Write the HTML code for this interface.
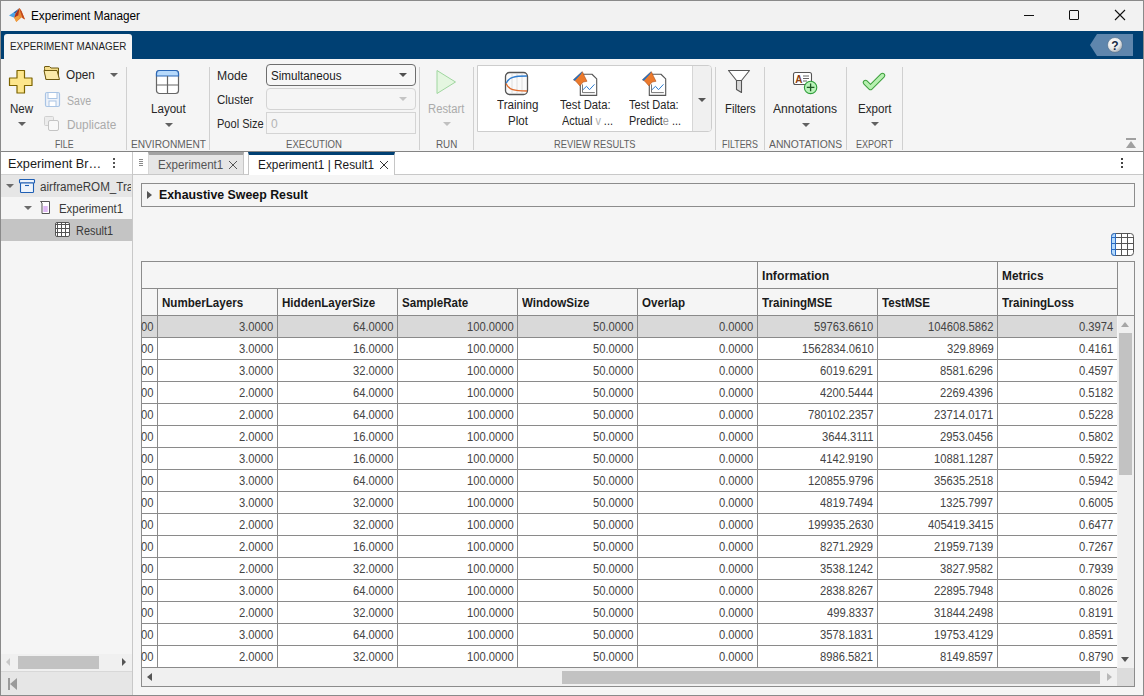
<!DOCTYPE html>
<html><head><meta charset="utf-8">
<style>
*{box-sizing:border-box;margin:0;padding:0}
html,body{width:1144px;height:696px;overflow:hidden;background:#f5f5f5;font-family:"Liberation Sans",sans-serif;color:#212121;position:relative}
.a{position:absolute}
.t{position:absolute;white-space:nowrap}
</style></head><body>
<div class="a" style="left:0px;top:0px;width:1144px;height:31px;background:#f2f2f2"></div>
<svg class="a" style="left:8px;top:7px;" width="18" height="16" viewBox="0 0 18 16">
<path d="M1 8.4 L5.5 5.6 L7.6 6.8 L6.2 10.8 Z" fill="#4aa3e6"/>
<path d="M5.5 5.6 L9.6 2.6 L11.5 1 L7.6 6.8 Z" fill="#2a64ad"/>
<path d="M11.5 1 L13.6 4.2 L17 12.4 L13.5 10.4 L8.3 15 L6.2 10.8 L7.6 6.8 Z" fill="#e98a35"/>
<path d="M11.5 1 L13.6 4.2 L17 12.4 L14.5 10.9 L12.4 5 Z" fill="#c0461e"/>
<path d="M7.6 6.8 L11.5 1 L10.2 8.6 L6.2 10.8 Z" fill="#a83220"/>
<path d="M6.2 10.8 L10.2 8.6 L12 10.5 L8.3 15 Z" fill="#f0a040"/>
</svg>
<div class="t " style="left:31.00px;top:9.03px;font-size:12px;line-height:14px;color:#000;transform:scaleX(0.9785);transform-origin:0 0;">Experiment Manager</div>
<div class="a" style="left:1024px;top:15px;width:10px;height:1px;background:#111"></div>
<div class="a" style="left:1069px;top:10px;width:10px;height:10px;border:1px solid #111;border-radius:1px"></div>
<svg class="a" style="left:1114px;top:9px;" width="12" height="12" viewBox="0 0 12 12"><path d="M1 1 L11 11 M11 1 L1 11" stroke="#111" stroke-width="1.1"/></svg>
<div class="a" style="left:0px;top:31px;width:1144px;height:28px;background:#004073"></div>
<div class="a" style="left:4px;top:34px;width:128px;height:25px;background:#f5f5f5;border-radius:3px 3px 0 0"></div>
<div class="t " style="left:9.50px;top:39.80px;font-size:11.2px;line-height:13px;color:#1e1e1e;transform:scaleX(0.8802);transform-origin:0 0;">EXPERIMENT MANAGER</div>
<svg class="a" style="left:1089px;top:34px;" width="45" height="22" viewBox="0 0 45 22"><path d="M1 11 L8 0 L44 0 L44 22 L8 22 Z" fill="#5f86ad"/><defs><radialGradient id="hg" cx="0.4" cy="0.35" r="0.7"><stop offset="0" stop-color="#ffffff"/><stop offset="0.6" stop-color="#e8e8e8"/><stop offset="1" stop-color="#9aa4ae"/></radialGradient></defs><circle cx="26" cy="11" r="7.5" fill="url(#hg)" stroke="#4a6a8a" stroke-width="0.6"/><text x="26" y="15.5" text-anchor="middle" font-family="Liberation Sans" font-weight="bold" font-size="12" fill="#1a2a44">?</text></svg>
<div class="a" style="left:0px;top:59px;width:1144px;height:93px;background:#f5f5f5;border-bottom:1px solid #848484"></div>
<div class="a" style="left:126px;top:67px;width:1px;height:83px;background:#d0d0d0"></div>
<div class="a" style="left:209px;top:67px;width:1px;height:83px;background:#d0d0d0"></div>
<div class="a" style="left:419px;top:67px;width:1px;height:83px;background:#d0d0d0"></div>
<div class="a" style="left:473px;top:67px;width:1px;height:83px;background:#d0d0d0"></div>
<div class="a" style="left:715px;top:67px;width:1px;height:83px;background:#d0d0d0"></div>
<div class="a" style="left:764px;top:67px;width:1px;height:83px;background:#d0d0d0"></div>
<div class="a" style="left:846px;top:67px;width:1px;height:83px;background:#d0d0d0"></div>
<div class="a" style="left:902px;top:67px;width:1px;height:83px;background:#d0d0d0"></div>
<div class="t " style="left:54.50px;top:137.86px;font-size:11px;line-height:13px;color:#5f5f5f;transform:scaleX(0.7957);transform-origin:0 0;">FILE</div>
<div class="t " style="left:130.50px;top:137.86px;font-size:11px;line-height:13px;color:#5f5f5f;transform:scaleX(0.9225);transform-origin:0 0;">ENVIRONMENT</div>
<div class="t " style="left:286.00px;top:137.86px;font-size:11px;line-height:13px;color:#5f5f5f;transform:scaleX(0.8730);transform-origin:0 0;">EXECUTION</div>
<div class="t " style="left:435.70px;top:137.86px;font-size:11px;line-height:13px;color:#5f5f5f;transform:scaleX(0.8931);transform-origin:0 0;">RUN</div>
<div class="t " style="left:554.20px;top:137.86px;font-size:11px;line-height:13px;color:#5f5f5f;transform:scaleX(0.8459);transform-origin:0 0;">REVIEW RESULTS</div>
<div class="t " style="left:722.00px;top:137.86px;font-size:11px;line-height:13px;color:#5f5f5f;transform:scaleX(0.8108);transform-origin:0 0;">FILTERS</div>
<div class="t " style="left:768.70px;top:137.86px;font-size:11px;line-height:13px;color:#5f5f5f;transform:scaleX(0.9396);transform-origin:0 0;">ANNOTATIONS</div>
<div class="t " style="left:856.00px;top:137.86px;font-size:11px;line-height:13px;color:#5f5f5f;transform:scaleX(0.8213);transform-origin:0 0;">EXPORT</div>
<svg class="a" style="left:8px;top:69px;" width="26" height="26" viewBox="0 0 26 26"><path d="M9 1.5 H16.5 V9 H24 V16.5 H16.5 V24 H9 V16.5 H1.5 V9 H9 Z" fill="#fde68c" stroke="#7d6400" stroke-width="1.2" stroke-linejoin="round"/></svg>
<div class="t " style="left:9.80px;top:102.03px;font-size:12px;line-height:14px;color:#262626;transform:scaleX(0.9605);transform-origin:0 0;">New</div>
<div class="a" style="left:18.0px;top:122px;width:0;height:0;border-left:4.0px solid transparent;border-right:4.0px solid transparent;border-top:4px solid #616161"></div>
<svg class="a" style="left:43px;top:65px;" width="19" height="16" viewBox="0 0 19 16"><path d="M1.5 3.5 L1.5 2 Q1.5 1.5 2 1.5 L6.5 1.5 L8 3 L15.5 3 L15.5 14.5 L3 14.5 Z" fill="#f3dc8a" stroke="#6e5a10" stroke-width="1"/><path d="M3 14.5 L1 5.5 L14 5.5 L16.5 14.5 Z" fill="#fbeaa8" stroke="#6e5a10" stroke-width="1" stroke-linejoin="round"/></svg>
<div class="t " style="left:66.20px;top:68.03px;font-size:12px;line-height:14px;color:#262626;transform:scaleX(0.9813);transform-origin:0 0;">Open</div>
<div class="a" style="left:110.0px;top:73px;width:0;height:0;border-left:4.0px solid transparent;border-right:4.0px solid transparent;border-top:4px solid #616161"></div>
<svg class="a" style="left:44px;top:91px;" width="17" height="17" viewBox="0 0 17 17"><rect x="1.5" y="1.5" width="14" height="14" rx="1.5" fill="#eef3fa" stroke="#a9c4e4" stroke-width="1.2"/><rect x="4" y="1.5" width="9" height="6" fill="#ffffff" stroke="#a9c4e4" stroke-width="1"/><rect x="5" y="10" width="7" height="5.5" fill="#ffffff" stroke="#a9c4e4" stroke-width="1"/></svg>
<div class="t " style="left:67.30px;top:94.03px;font-size:12px;line-height:14px;color:#ababab;transform:scaleX(0.8812);transform-origin:0 0;">Save</div>
<svg class="a" style="left:43px;top:115px;" width="17" height="17" viewBox="0 0 17 17"><rect x="1.5" y="1.5" width="9" height="9" rx="1" fill="#ececec" stroke="#d0d0d0" stroke-width="1"/><rect x="5.5" y="5.5" width="10" height="10" rx="1.5" fill="#f8f8f8" stroke="#c4c4c4" stroke-width="1"/></svg>
<div class="t " style="left:66.70px;top:117.63px;font-size:12px;line-height:14px;color:#ababab;transform:scaleX(0.9850);transform-origin:0 0;">Duplicate</div>
<svg class="a" style="left:155px;top:69px;" width="25" height="26" viewBox="0 0 25 26"><rect x="1.5" y="1.5" width="22" height="23" rx="3" fill="#fff" stroke="#666" stroke-width="1.2"/><path d="M1.5 7 V4.5 Q1.5 1.5 4.5 1.5 H20.5 Q23.5 1.5 23.5 4.5 V7 Z" fill="#b6d9fb" stroke="#2b68b8" stroke-width="1.2"/><path d="M12.5 7 V24.5 M1.5 16 H23.5" stroke="#666" stroke-width="1.2"/></svg>
<div class="t " style="left:150.50px;top:102.03px;font-size:12px;line-height:14px;color:#262626;transform:scaleX(0.9653);transform-origin:0 0;">Layout</div>
<div class="a" style="left:165.0px;top:123px;width:0;height:0;border-left:4.0px solid transparent;border-right:4.0px solid transparent;border-top:4px solid #616161"></div>
<div class="t " style="left:216.50px;top:69.03px;font-size:12px;line-height:14px;color:#262626;transform:scaleX(1.0167);transform-origin:0 0;">Mode</div>
<div class="t " style="left:216.50px;top:92.73px;font-size:12px;line-height:14px;color:#262626;transform:scaleX(0.9579);transform-origin:0 0;">Cluster</div>
<div class="t " style="left:216.50px;top:116.53px;font-size:12px;line-height:14px;color:#262626;transform:scaleX(0.9211);transform-origin:0 0;">Pool Size</div>
<div class="a" style="left:266px;top:64px;width:150px;height:22px;border:1px solid #6e6e6e;border-radius:4px;background:#f7f7f7"></div>
<div class="t " style="left:271.00px;top:69.03px;font-size:12px;line-height:14px;color:#1a1a1a;transform:scaleX(0.9697);transform-origin:0 0;">Simultaneous</div>
<div class="a" style="left:399.0px;top:73px;width:0;height:0;border-left:4.0px solid transparent;border-right:4.0px solid transparent;border-top:4px solid #505050"></div>
<div class="a" style="left:266px;top:88px;width:150px;height:22px;border:1px solid #d4d4d4;border-radius:4px;background:#f5f5f5"></div>
<div class="a" style="left:399.0px;top:97px;width:0;height:0;border-left:4.0px solid transparent;border-right:4.0px solid transparent;border-top:4px solid #c4c4c4"></div>
<div class="a" style="left:266px;top:112px;width:150px;height:22px;border:1px solid #d4d4d4;background:#f5f5f5"></div>
<div class="t " style="left:271.00px;top:116.53px;font-size:12px;line-height:14px;color:#b4b4b4;">0</div>
<svg class="a" style="left:433px;top:69px;" width="25" height="26" viewBox="0 0 25 26"><path d="M4 1.5 L22.5 13 L4 24.5 Z" fill="#e4f6e0" stroke="#9fd69f" stroke-width="1" stroke-linejoin="round"/></svg>
<div class="t " style="left:428.00px;top:102.03px;font-size:12px;line-height:14px;color:#ababab;transform:scaleX(0.9380);transform-origin:0 0;">Restart</div>
<div class="a" style="left:442.5px;top:122px;width:0;height:0;border-left:4.0px solid transparent;border-right:4.0px solid transparent;border-top:4px solid #c0c0c0"></div>
<div class="a" style="left:477px;top:65px;width:235px;height:67px;background:#fff;border:1px solid #cdcdcd;border-radius:0 4px 4px 0"></div>
<div class="a" style="left:692px;top:66px;width:19px;height:65px;background:#f0f0f0;border-left:1px solid #d6d6d6;border-radius:0 3px 3px 0"></div>
<div class="a" style="left:698.0px;top:98px;width:0;height:0;border-left:4.0px solid transparent;border-right:4.0px solid transparent;border-top:4px solid #555"></div>
<svg class="a" style="left:504px;top:71px;" width="25" height="25" viewBox="0 0 25 25"><rect x="1.5" y="1.5" width="22" height="22" rx="4" fill="#fafafa" stroke="#555" stroke-width="1.3"/><path d="M8 3 V22 M13 3 V22 M18 3 V22" stroke="#ececec" stroke-width="2"/><path d="M2 12.5 C5 6 10 5 23 5" fill="none" stroke="#2f7dd0" stroke-width="1.3"/><path d="M2 12.5 C5 19 10 20 23 20" fill="none" stroke="#e06a2a" stroke-width="1.3"/></svg>
<div class="t " style="left:496.60px;top:98.03px;font-size:12px;line-height:14px;color:#262626;transform:scaleX(0.9650);transform-origin:0 0;">Training</div>
<div class="t " style="left:507.60px;top:113.73px;font-size:12px;line-height:14px;color:#262626;transform:scaleX(0.9614);transform-origin:0 0;">Plot</div>
<svg class="a" style="left:572px;top:71px;" width="26" height="26" viewBox="0 0 26 26"><path d="M8.3 3.25 H20 L24.7 7.8 V24.4 H8.3 Z" fill="#fff" stroke="#555" stroke-width="1.1" stroke-linejoin="round"/><path d="M10.5 13.4 V21.6 H22.8" fill="none" stroke="#777" stroke-width="1"/><path d="M11 18.7 L14.5 15.3 L17.5 18.7 L22.5 13.3" fill="none" stroke="#2f7dd0" stroke-width="1"/><path d="M10.4 0.8 L12.6 5.5 L15 10.3 L11.2 11 L7.8 14.8 L3.6 10 L1.5 8.8 L9.6 1.2 Z" fill="#ec7a2c" stroke="#b0501a" stroke-width="0.6"/><path d="M1.2 8.8 L9.6 1.0 L10.4 0.8 L8.6 3.6 L2.9 9.7 Z" fill="#1f6fc2"/></svg>
<div class="t " style="left:560.40px;top:97.83px;font-size:12px;line-height:14px;color:#262626;transform:scaleX(0.9362);transform-origin:0 0;">Test Data:</div>
<div class="t " style="left:562.00px;top:113.53px;font-size:12px;line-height:14px;color:#262626;transform:scaleX(0.9099);transform-origin:0 0;">Actual <span style="color:#b0b0b0">v</span> ...</div>
<svg class="a" style="left:641px;top:71px;" width="26" height="26" viewBox="0 0 26 26"><path d="M8.3 3.25 H20 L24.7 7.8 V24.4 H8.3 Z" fill="#fff" stroke="#555" stroke-width="1.1" stroke-linejoin="round"/><path d="M10.5 13.4 V21.6 H22.8" fill="none" stroke="#777" stroke-width="1"/><path d="M11 18.7 L14.5 15.3 L17.5 18.7 L22.5 13.3" fill="none" stroke="#2f7dd0" stroke-width="1"/><path d="M10.4 0.8 L12.6 5.5 L15 10.3 L11.2 11 L7.8 14.8 L3.6 10 L1.5 8.8 L9.6 1.2 Z" fill="#ec7a2c" stroke="#b0501a" stroke-width="0.6"/><path d="M1.2 8.8 L9.6 1.0 L10.4 0.8 L8.6 3.6 L2.9 9.7 Z" fill="#1f6fc2"/></svg>
<div class="t " style="left:628.80px;top:97.83px;font-size:12px;line-height:14px;color:#262626;transform:scaleX(0.9195);transform-origin:0 0;">Test Data:</div>
<div class="t " style="left:628.80px;top:113.53px;font-size:12px;line-height:14px;color:#262626;transform:scaleX(0.9067);transform-origin:0 0;">Predict<span style="color:#9a9a9a">e</span> ...</div>
<svg class="a" style="left:727px;top:69px;" width="25" height="26" viewBox="0 0 25 26"><path d="M1.5 1.5 H22.5 L14.5 11.5 H9.5 Z" fill="#fff" stroke="#555" stroke-width="1.1" stroke-linejoin="round"/><path d="M9.5 11.5 H14.5 V23.5 L9.5 20.5 Z" fill="#d8d8d8" stroke="#555" stroke-width="1.1" stroke-linejoin="round"/></svg>
<div class="t " style="left:724.90px;top:102.03px;font-size:12px;line-height:14px;color:#262626;transform:scaleX(0.9403);transform-origin:0 0;">Filters</div>
<svg class="a" style="left:791px;top:70px;" width="28" height="26" viewBox="0 0 28 26"><rect x="2.5" y="2.5" width="18" height="12" rx="2" fill="#fff" stroke="#555" stroke-width="1.1"/><text x="4.2" y="12.6" font-family="Liberation Sans" font-weight="bold" font-size="10" fill="#8a4010">A</text><path d="M12 6 H18 M12 8.5 H18 M12 11 H16" stroke="#666" stroke-width="1"/><circle cx="19.6" cy="17.4" r="6.2" fill="#b9f2b9" stroke="#2e9e3a" stroke-width="1.1"/><path d="M19.6 13.6 V21.2 M15.8 17.4 H23.4" stroke="#1d5a24" stroke-width="1.3"/></svg>
<div class="t " style="left:772.80px;top:102.03px;font-size:12px;line-height:14px;color:#262626;transform:scaleX(1.0095);transform-origin:0 0;">Annotations</div>
<div class="a" style="left:802.0px;top:123px;width:0;height:0;border-left:4.0px solid transparent;border-right:4.0px solid transparent;border-top:4px solid #616161"></div>
<svg class="a" style="left:860px;top:71px;" width="28" height="22" viewBox="0 0 28 22"><path d="M5.5 11.5 L10.5 16.5 L22.5 4.5" fill="none" stroke="#3ea03e" stroke-width="5.4" stroke-linecap="round" stroke-linejoin="round"/><path d="M5.5 11.5 L10.5 16.5 L22.5 4.5" fill="none" stroke="#b7f0b0" stroke-width="3.4" stroke-linecap="round" stroke-linejoin="round"/></svg>
<div class="t " style="left:857.50px;top:102.03px;font-size:12px;line-height:14px;color:#262626;transform:scaleX(0.9654);transform-origin:0 0;">Export</div>
<div class="a" style="left:871.0px;top:122px;width:0;height:0;border-left:4.0px solid transparent;border-right:4.0px solid transparent;border-top:4px solid #616161"></div>
<div class="a" style="left:1126px;top:138px;width:10px;height:2px;background:#a0a0a0"></div>
<div class="a" style="left:1126px;top:141px;width:0;height:0;border-left:5px solid transparent;border-right:5px solid transparent;border-bottom:7px solid #a0a0a0"></div>
<div class="a" style="left:1px;top:152px;width:131px;height:543px;background:#f5f5f5"></div>
<div class="a" style="left:132px;top:152px;width:1px;height:543px;background:#c8c8c8"></div>
<div class="a" style="left:1px;top:152px;width:131px;height:22px;background:#fff"></div>
<div class="a" style="left:1px;top:174px;width:131px;height:1px;background:#d2d2d2"></div>
<div class="t " style="left:7.50px;top:156.57px;font-size:12.5px;line-height:14px;color:#1a1a1a;transform:scaleX(1.0164);transform-origin:0 0;">Experiment Br…</div>
<div class="a" style="left:113px;top:158px;width:2px;height:2px;background:#555"></div>
<div class="a" style="left:113px;top:162px;width:2px;height:2px;background:#555"></div>
<div class="a" style="left:113px;top:166px;width:2px;height:2px;background:#555"></div>
<div class="a" style="left:1px;top:175px;width:131px;height:22px;background:#e6e6e6"></div>
<div class="a" style="left:1px;top:197px;width:131px;height:22px;background:#f5f5f5"></div>
<div class="a" style="left:1px;top:219px;width:131px;height:22px;background:#c4c4c4"></div>
<div class="a" style="left:6.0px;top:184px;width:0;height:0;border-left:4.0px solid transparent;border-right:4.0px solid transparent;border-top:4px solid #6b6b6b"></div>
<svg class="a" style="left:18px;top:178px;" width="18" height="16" viewBox="0 0 18 16"><rect x="1.5" y="1.5" width="15" height="3.5" rx="0.8" fill="#eef4fc" stroke="#1f5fb4" stroke-width="1.1"/><rect x="2.5" y="5" width="13" height="9.5" rx="0.8" fill="#eef4fc" stroke="#1f5fb4" stroke-width="1.1"/><path d="M7 7.5 H11" stroke="#1f5fb4" stroke-width="1.1"/></svg>
<div class="a" style="left:38px;top:175px;width:93px;height:22px;overflow:hidden">
<div class="t " style="left:2.10px;top:4.63px;font-size:12px;line-height:14px;color:#3a3a3a;transform:scaleX(0.97);transform-origin:0 0;">airframeROM_TrainingExperiment</div>
</div>
<div class="a" style="left:24.0px;top:206px;width:0;height:0;border-left:4.0px solid transparent;border-right:4.0px solid transparent;border-top:4px solid #6b6b6b"></div>
<svg class="a" style="left:39px;top:200px;" width="12" height="15" viewBox="0 0 12 15"><path d="M1.5 1.5 H10.5 V13.5 H3 V3 Z" fill="#fff" stroke="#555" stroke-width="1" stroke-linejoin="round"/><rect x="4.3" y="6" width="4.4" height="6" fill="#dfb8f4"/></svg>
<div class="t " style="left:58.50px;top:201.73px;font-size:12px;line-height:14px;color:#3a3a3a;transform:scaleX(0.9517);transform-origin:0 0;">Experiment1</div>
<svg class="a" style="left:54px;top:221px;" width="17" height="17" viewBox="0 0 17 17"><rect x="1.5" y="1.5" width="14" height="14" rx="1.5" fill="#fff" stroke="#555" stroke-width="1"/><path d="M3.5 1.5 V15.5 M7.5 1.5 V15.5 M11.5 1.5 V15.5 M1.5 3.5 H15.5 M1.5 7.5 H15.5 M1.5 11.5 H15.5" stroke="#555" stroke-width="1"/></svg>
<div class="t " style="left:76.00px;top:223.83px;font-size:12px;line-height:14px;color:#3a3a3a;transform:scaleX(0.9091);transform-origin:0 0;">Result1</div>
<div class="a" style="left:1px;top:654px;width:131px;height:17px;background:#f0f0f0"></div>
<div class="a" style="left:18px;top:656px;width:81px;height:13px;background:#c2c2c2"></div>
<div class="a" style="left:6px;top:658px;width:0;height:0;border-top:4px solid transparent;border-bottom:4px solid transparent;border-right:4px solid #c8c8c8"></div>
<div class="a" style="left:122px;top:658px;width:0;height:0;border-top:4px solid transparent;border-bottom:4px solid transparent;border-left:4px solid #555"></div>
<div class="a" style="left:1px;top:671px;width:131px;height:1px;background:#d8d8d8"></div>
<div class="a" style="left:1px;top:672px;width:131px;height:23px;background:#e6e6e6"></div>
<div class="a" style="left:8px;top:678px;width:2px;height:12px;background:#9a9a9a"></div>
<div class="a" style="left:10px;top:678px;width:0;height:0;border-top:6px solid transparent;border-bottom:6px solid transparent;border-right:7px solid #9a9a9a"></div>
<div class="a" style="left:133px;top:152px;width:1010px;height:22px;background:#fff"></div>
<div class="a" style="left:133px;top:174px;width:1010px;height:1px;background:#c8c8c8"></div>
<div class="a" style="left:139px;top:159px;width:4px;height:1px;background:#8a8a8a"></div>
<div class="a" style="left:139px;top:161px;width:4px;height:1px;background:#8a8a8a"></div>
<div class="a" style="left:139px;top:163px;width:4px;height:1px;background:#8a8a8a"></div>
<div class="a" style="left:139px;top:165px;width:4px;height:1px;background:#8a8a8a"></div>
<div class="a" style="left:148px;top:152px;width:96px;height:22px;background:#e6e6e6;border-top:3px solid #a3a3a3;border-right:1px solid #c6c6c6;border-left:1px solid #d8d8d8"></div>
<div class="t " style="left:157.70px;top:157.87px;font-size:12.5px;line-height:14px;color:#555;transform:scaleX(0.9309);transform-origin:0 0;">Experiment1</div>
<svg class="a" style="left:228px;top:160px;" width="10" height="10" viewBox="0 0 10 10"><path d="M1 1 L9 9 M9 1 L1 9" stroke="#555" stroke-width="1"/></svg>
<div class="a" style="left:248px;top:152px;width:147px;height:23px;background:#fff;border-top:3px solid #004073;border-left:1px solid #c6c6c6;border-right:1px solid #c6c6c6"></div>
<div class="t " style="left:257.50px;top:157.87px;font-size:12.5px;line-height:14px;color:#1a1a1a;transform:scaleX(0.9466);transform-origin:0 0;">Experiment1 | Result1</div>
<svg class="a" style="left:379px;top:160px;" width="10" height="10" viewBox="0 0 10 10"><path d="M1 1 L9 9 M9 1 L1 9" stroke="#333" stroke-width="1"/></svg>
<div class="a" style="left:1121px;top:158px;width:2px;height:2px;background:#444"></div>
<div class="a" style="left:1121px;top:162px;width:2px;height:2px;background:#444"></div>
<div class="a" style="left:1121px;top:166px;width:2px;height:2px;background:#444"></div>
<div class="a" style="left:133px;top:175px;width:1010px;height:520px;background:#f5f5f5"></div>
<div class="a" style="left:141px;top:183px;width:994px;height:24px;border:1px solid #8c8c8c;background:#f5f5f5"></div>
<div class="a" style="left:147px;top:191px;width:0;height:0;border-top:4px solid transparent;border-bottom:4px solid transparent;border-left:5px solid #555"></div>
<div class="t " style="left:158.50px;top:188.37px;font-size:12.5px;line-height:14px;color:#111;font-weight:bold;transform:scaleX(0.9877);transform-origin:0 0;">Exhaustive Sweep Result</div>
<svg class="a" style="left:1110px;top:232px;" width="25" height="25" viewBox="0 0 25 25"><rect x="1.5" y="1.5" width="22" height="22" rx="3" fill="#fff" stroke="#555" stroke-width="1"/><path d="M5.5 1.5 H4.5 Q1.5 1.5 1.5 4.5 V20.5 Q1.5 23.5 4.5 23.5 H5.5 Z" fill="#b4dafc" stroke="#2b6cc4" stroke-width="1"/><path d="M11.5 1.5 V23.5 M17.5 1.5 V23.5 M6 5.5 H23.5 M6 11.5 H23.5 M6 17.5 H23.5" stroke="#555" stroke-width="1"/><path d="M1.5 5.5 H5.5 M1.5 11.5 H5.5 M1.5 17.5 H5.5" stroke="#2b6cc4" stroke-width="1"/></svg>
<div class="a" style="left:141px;top:261px;width:994px;height:426px;border:1px solid #8c8c8c;background:#f5f5f5"></div>
<div class="a" style="left:142px;top:288px;width:975px;height:1px;background:#8a8a8a"></div>
<div class="a" style="left:142px;top:315px;width:992px;height:1px;background:#8a8a8a"></div>
<div class="a" style="left:757px;top:262px;width:1px;height:26px;background:#8a8a8a"></div>
<div class="a" style="left:997px;top:262px;width:1px;height:26px;background:#8a8a8a"></div>
<div class="a" style="left:1117px;top:262px;width:1px;height:26px;background:#8a8a8a"></div>
<div class="a" style="left:1117px;top:288px;width:1px;height:27px;background:#8a8a8a"></div>
<div class="a" style="left:157px;top:289px;width:1px;height:26px;background:#8a8a8a"></div>
<div class="a" style="left:277px;top:289px;width:1px;height:26px;background:#8a8a8a"></div>
<div class="a" style="left:397px;top:289px;width:1px;height:26px;background:#8a8a8a"></div>
<div class="a" style="left:517px;top:289px;width:1px;height:26px;background:#8a8a8a"></div>
<div class="a" style="left:637px;top:289px;width:1px;height:26px;background:#8a8a8a"></div>
<div class="a" style="left:757px;top:289px;width:1px;height:26px;background:#8a8a8a"></div>
<div class="a" style="left:877px;top:289px;width:1px;height:26px;background:#8a8a8a"></div>
<div class="a" style="left:997px;top:289px;width:1px;height:26px;background:#8a8a8a"></div>
<div class="a" style="left:1117px;top:289px;width:1px;height:26px;background:#8a8a8a"></div>
<div class="t " style="left:761.70px;top:269.03px;font-size:12px;line-height:14px;color:#1a1a1a;font-weight:bold;transform:scaleX(1.0197);transform-origin:0 0;">Information</div>
<div class="t " style="left:1001.50px;top:269.03px;font-size:12px;line-height:14px;color:#1a1a1a;font-weight:bold;transform:scaleX(0.9881);transform-origin:0 0;">Metrics</div>
<div class="t " style="left:161.50px;top:295.73px;font-size:12px;line-height:14px;color:#1a1a1a;font-weight:bold;transform:scaleX(0.9650);transform-origin:0 0;">NumberLayers</div>
<div class="t " style="left:281.50px;top:295.73px;font-size:12px;line-height:14px;color:#1a1a1a;font-weight:bold;transform:scaleX(0.9650);transform-origin:0 0;">HiddenLayerSize</div>
<div class="t " style="left:401.50px;top:295.73px;font-size:12px;line-height:14px;color:#1a1a1a;font-weight:bold;transform:scaleX(0.9650);transform-origin:0 0;">SampleRate</div>
<div class="t " style="left:521.50px;top:295.73px;font-size:12px;line-height:14px;color:#1a1a1a;font-weight:bold;transform:scaleX(0.9650);transform-origin:0 0;">WindowSize</div>
<div class="t " style="left:641.50px;top:295.73px;font-size:12px;line-height:14px;color:#1a1a1a;font-weight:bold;transform:scaleX(0.9650);transform-origin:0 0;">Overlap</div>
<div class="t " style="left:761.50px;top:295.73px;font-size:12px;line-height:14px;color:#1a1a1a;font-weight:bold;transform:scaleX(0.9650);transform-origin:0 0;">TrainingMSE</div>
<div class="t " style="left:881.50px;top:295.73px;font-size:12px;line-height:14px;color:#1a1a1a;font-weight:bold;transform:scaleX(0.9650);transform-origin:0 0;">TestMSE</div>
<div class="t " style="left:1001.50px;top:295.73px;font-size:12px;line-height:14px;color:#1a1a1a;font-weight:bold;transform:scaleX(0.9650);transform-origin:0 0;">TrainingLoss</div>
<div class="a" style="left:142px;top:316px;width:975px;height:21px;background:#d9d9d9"></div>
<div class="a" style="left:142px;top:337px;width:975px;height:1px;background:#8a8a8a"></div>
<div class="t " style="left:141.02px;top:320.03px;font-size:12px;line-height:14px;color:#444444;transform:scaleX(0.9350);transform-origin:0 0;">00</div>
<div class="t " style="left:239.19px;top:320.03px;font-size:12px;line-height:14px;color:#444444;transform:scaleX(0.9350);transform-origin:0 0;">3.0000</div>
<div class="t " style="left:352.92px;top:320.03px;font-size:12px;line-height:14px;color:#444444;transform:scaleX(0.9350);transform-origin:0 0;">64.0000</div>
<div class="t " style="left:466.70px;top:320.03px;font-size:12px;line-height:14px;color:#444444;transform:scaleX(0.9350);transform-origin:0 0;">100.0000</div>
<div class="t " style="left:592.92px;top:320.03px;font-size:12px;line-height:14px;color:#444444;transform:scaleX(0.9350);transform-origin:0 0;">50.0000</div>
<div class="t " style="left:719.19px;top:320.03px;font-size:12px;line-height:14px;color:#444444;transform:scaleX(0.9350);transform-origin:0 0;">0.0000</div>
<div class="t " style="left:814.22px;top:320.03px;font-size:12px;line-height:14px;color:#444444;transform:scaleX(0.9350);transform-origin:0 0;">59763.6610</div>
<div class="t " style="left:927.96px;top:320.03px;font-size:12px;line-height:14px;color:#444444;transform:scaleX(0.9350);transform-origin:0 0;">104608.5862</div>
<div class="t " style="left:1079.19px;top:320.03px;font-size:12px;line-height:14px;color:#444444;transform:scaleX(0.9350);transform-origin:0 0;">0.3974</div>
<div class="a" style="left:142px;top:338px;width:975px;height:21px;background:#ffffff"></div>
<div class="a" style="left:142px;top:359px;width:975px;height:1px;background:#8a8a8a"></div>
<div class="t " style="left:141.02px;top:342.03px;font-size:12px;line-height:14px;color:#444444;transform:scaleX(0.9350);transform-origin:0 0;">00</div>
<div class="t " style="left:239.19px;top:342.03px;font-size:12px;line-height:14px;color:#444444;transform:scaleX(0.9350);transform-origin:0 0;">3.0000</div>
<div class="t " style="left:352.92px;top:342.03px;font-size:12px;line-height:14px;color:#444444;transform:scaleX(0.9350);transform-origin:0 0;">16.0000</div>
<div class="t " style="left:466.70px;top:342.03px;font-size:12px;line-height:14px;color:#444444;transform:scaleX(0.9350);transform-origin:0 0;">100.0000</div>
<div class="t " style="left:592.92px;top:342.03px;font-size:12px;line-height:14px;color:#444444;transform:scaleX(0.9350);transform-origin:0 0;">50.0000</div>
<div class="t " style="left:719.19px;top:342.03px;font-size:12px;line-height:14px;color:#444444;transform:scaleX(0.9350);transform-origin:0 0;">0.0000</div>
<div class="t " style="left:801.74px;top:342.03px;font-size:12px;line-height:14px;color:#444444;transform:scaleX(0.9350);transform-origin:0 0;">1562834.0610</div>
<div class="t " style="left:946.70px;top:342.03px;font-size:12px;line-height:14px;color:#444444;transform:scaleX(0.9350);transform-origin:0 0;">329.8969</div>
<div class="t " style="left:1079.19px;top:342.03px;font-size:12px;line-height:14px;color:#444444;transform:scaleX(0.9350);transform-origin:0 0;">0.4161</div>
<div class="a" style="left:142px;top:360px;width:975px;height:21px;background:#ffffff"></div>
<div class="a" style="left:142px;top:381px;width:975px;height:1px;background:#8a8a8a"></div>
<div class="t " style="left:141.02px;top:364.03px;font-size:12px;line-height:14px;color:#444444;transform:scaleX(0.9350);transform-origin:0 0;">00</div>
<div class="t " style="left:239.19px;top:364.03px;font-size:12px;line-height:14px;color:#444444;transform:scaleX(0.9350);transform-origin:0 0;">3.0000</div>
<div class="t " style="left:352.92px;top:364.03px;font-size:12px;line-height:14px;color:#444444;transform:scaleX(0.9350);transform-origin:0 0;">32.0000</div>
<div class="t " style="left:466.70px;top:364.03px;font-size:12px;line-height:14px;color:#444444;transform:scaleX(0.9350);transform-origin:0 0;">100.0000</div>
<div class="t " style="left:592.92px;top:364.03px;font-size:12px;line-height:14px;color:#444444;transform:scaleX(0.9350);transform-origin:0 0;">50.0000</div>
<div class="t " style="left:719.19px;top:364.03px;font-size:12px;line-height:14px;color:#444444;transform:scaleX(0.9350);transform-origin:0 0;">0.0000</div>
<div class="t " style="left:820.44px;top:364.03px;font-size:12px;line-height:14px;color:#444444;transform:scaleX(0.9350);transform-origin:0 0;">6019.6291</div>
<div class="t " style="left:940.44px;top:364.03px;font-size:12px;line-height:14px;color:#444444;transform:scaleX(0.9350);transform-origin:0 0;">8581.6296</div>
<div class="t " style="left:1079.19px;top:364.03px;font-size:12px;line-height:14px;color:#444444;transform:scaleX(0.9350);transform-origin:0 0;">0.4597</div>
<div class="a" style="left:142px;top:382px;width:975px;height:21px;background:#ffffff"></div>
<div class="a" style="left:142px;top:403px;width:975px;height:1px;background:#8a8a8a"></div>
<div class="t " style="left:141.02px;top:386.03px;font-size:12px;line-height:14px;color:#444444;transform:scaleX(0.9350);transform-origin:0 0;">00</div>
<div class="t " style="left:239.19px;top:386.03px;font-size:12px;line-height:14px;color:#444444;transform:scaleX(0.9350);transform-origin:0 0;">2.0000</div>
<div class="t " style="left:352.92px;top:386.03px;font-size:12px;line-height:14px;color:#444444;transform:scaleX(0.9350);transform-origin:0 0;">64.0000</div>
<div class="t " style="left:466.70px;top:386.03px;font-size:12px;line-height:14px;color:#444444;transform:scaleX(0.9350);transform-origin:0 0;">100.0000</div>
<div class="t " style="left:592.92px;top:386.03px;font-size:12px;line-height:14px;color:#444444;transform:scaleX(0.9350);transform-origin:0 0;">50.0000</div>
<div class="t " style="left:719.19px;top:386.03px;font-size:12px;line-height:14px;color:#444444;transform:scaleX(0.9350);transform-origin:0 0;">0.0000</div>
<div class="t " style="left:820.44px;top:386.03px;font-size:12px;line-height:14px;color:#444444;transform:scaleX(0.9350);transform-origin:0 0;">4200.5444</div>
<div class="t " style="left:940.44px;top:386.03px;font-size:12px;line-height:14px;color:#444444;transform:scaleX(0.9350);transform-origin:0 0;">2269.4396</div>
<div class="t " style="left:1079.19px;top:386.03px;font-size:12px;line-height:14px;color:#444444;transform:scaleX(0.9350);transform-origin:0 0;">0.5182</div>
<div class="a" style="left:142px;top:404px;width:975px;height:21px;background:#ffffff"></div>
<div class="a" style="left:142px;top:425px;width:975px;height:1px;background:#8a8a8a"></div>
<div class="t " style="left:141.02px;top:408.03px;font-size:12px;line-height:14px;color:#444444;transform:scaleX(0.9350);transform-origin:0 0;">00</div>
<div class="t " style="left:239.19px;top:408.03px;font-size:12px;line-height:14px;color:#444444;transform:scaleX(0.9350);transform-origin:0 0;">2.0000</div>
<div class="t " style="left:352.92px;top:408.03px;font-size:12px;line-height:14px;color:#444444;transform:scaleX(0.9350);transform-origin:0 0;">64.0000</div>
<div class="t " style="left:466.70px;top:408.03px;font-size:12px;line-height:14px;color:#444444;transform:scaleX(0.9350);transform-origin:0 0;">100.0000</div>
<div class="t " style="left:592.92px;top:408.03px;font-size:12px;line-height:14px;color:#444444;transform:scaleX(0.9350);transform-origin:0 0;">50.0000</div>
<div class="t " style="left:719.19px;top:408.03px;font-size:12px;line-height:14px;color:#444444;transform:scaleX(0.9350);transform-origin:0 0;">0.0000</div>
<div class="t " style="left:807.96px;top:408.03px;font-size:12px;line-height:14px;color:#444444;transform:scaleX(0.9350);transform-origin:0 0;">780102.2357</div>
<div class="t " style="left:934.22px;top:408.03px;font-size:12px;line-height:14px;color:#444444;transform:scaleX(0.9350);transform-origin:0 0;">23714.0171</div>
<div class="t " style="left:1079.19px;top:408.03px;font-size:12px;line-height:14px;color:#444444;transform:scaleX(0.9350);transform-origin:0 0;">0.5228</div>
<div class="a" style="left:142px;top:426px;width:975px;height:21px;background:#ffffff"></div>
<div class="a" style="left:142px;top:447px;width:975px;height:1px;background:#8a8a8a"></div>
<div class="t " style="left:141.02px;top:430.03px;font-size:12px;line-height:14px;color:#444444;transform:scaleX(0.9350);transform-origin:0 0;">00</div>
<div class="t " style="left:239.19px;top:430.03px;font-size:12px;line-height:14px;color:#444444;transform:scaleX(0.9350);transform-origin:0 0;">2.0000</div>
<div class="t " style="left:352.92px;top:430.03px;font-size:12px;line-height:14px;color:#444444;transform:scaleX(0.9350);transform-origin:0 0;">16.0000</div>
<div class="t " style="left:466.70px;top:430.03px;font-size:12px;line-height:14px;color:#444444;transform:scaleX(0.9350);transform-origin:0 0;">100.0000</div>
<div class="t " style="left:592.92px;top:430.03px;font-size:12px;line-height:14px;color:#444444;transform:scaleX(0.9350);transform-origin:0 0;">50.0000</div>
<div class="t " style="left:719.19px;top:430.03px;font-size:12px;line-height:14px;color:#444444;transform:scaleX(0.9350);transform-origin:0 0;">0.0000</div>
<div class="t " style="left:822.12px;top:430.03px;font-size:12px;line-height:14px;color:#444444;transform:scaleX(0.9350);transform-origin:0 0;">3644.3111</div>
<div class="t " style="left:940.44px;top:430.03px;font-size:12px;line-height:14px;color:#444444;transform:scaleX(0.9350);transform-origin:0 0;">2953.0456</div>
<div class="t " style="left:1079.19px;top:430.03px;font-size:12px;line-height:14px;color:#444444;transform:scaleX(0.9350);transform-origin:0 0;">0.5802</div>
<div class="a" style="left:142px;top:448px;width:975px;height:21px;background:#ffffff"></div>
<div class="a" style="left:142px;top:469px;width:975px;height:1px;background:#8a8a8a"></div>
<div class="t " style="left:141.02px;top:452.03px;font-size:12px;line-height:14px;color:#444444;transform:scaleX(0.9350);transform-origin:0 0;">00</div>
<div class="t " style="left:239.19px;top:452.03px;font-size:12px;line-height:14px;color:#444444;transform:scaleX(0.9350);transform-origin:0 0;">3.0000</div>
<div class="t " style="left:352.92px;top:452.03px;font-size:12px;line-height:14px;color:#444444;transform:scaleX(0.9350);transform-origin:0 0;">16.0000</div>
<div class="t " style="left:466.70px;top:452.03px;font-size:12px;line-height:14px;color:#444444;transform:scaleX(0.9350);transform-origin:0 0;">100.0000</div>
<div class="t " style="left:592.92px;top:452.03px;font-size:12px;line-height:14px;color:#444444;transform:scaleX(0.9350);transform-origin:0 0;">50.0000</div>
<div class="t " style="left:719.19px;top:452.03px;font-size:12px;line-height:14px;color:#444444;transform:scaleX(0.9350);transform-origin:0 0;">0.0000</div>
<div class="t " style="left:820.44px;top:452.03px;font-size:12px;line-height:14px;color:#444444;transform:scaleX(0.9350);transform-origin:0 0;">4142.9190</div>
<div class="t " style="left:934.22px;top:452.03px;font-size:12px;line-height:14px;color:#444444;transform:scaleX(0.9350);transform-origin:0 0;">10881.1287</div>
<div class="t " style="left:1079.19px;top:452.03px;font-size:12px;line-height:14px;color:#444444;transform:scaleX(0.9350);transform-origin:0 0;">0.5922</div>
<div class="a" style="left:142px;top:470px;width:975px;height:21px;background:#ffffff"></div>
<div class="a" style="left:142px;top:491px;width:975px;height:1px;background:#8a8a8a"></div>
<div class="t " style="left:141.02px;top:474.03px;font-size:12px;line-height:14px;color:#444444;transform:scaleX(0.9350);transform-origin:0 0;">00</div>
<div class="t " style="left:239.19px;top:474.03px;font-size:12px;line-height:14px;color:#444444;transform:scaleX(0.9350);transform-origin:0 0;">3.0000</div>
<div class="t " style="left:352.92px;top:474.03px;font-size:12px;line-height:14px;color:#444444;transform:scaleX(0.9350);transform-origin:0 0;">64.0000</div>
<div class="t " style="left:466.70px;top:474.03px;font-size:12px;line-height:14px;color:#444444;transform:scaleX(0.9350);transform-origin:0 0;">100.0000</div>
<div class="t " style="left:592.92px;top:474.03px;font-size:12px;line-height:14px;color:#444444;transform:scaleX(0.9350);transform-origin:0 0;">50.0000</div>
<div class="t " style="left:719.19px;top:474.03px;font-size:12px;line-height:14px;color:#444444;transform:scaleX(0.9350);transform-origin:0 0;">0.0000</div>
<div class="t " style="left:807.96px;top:474.03px;font-size:12px;line-height:14px;color:#444444;transform:scaleX(0.9350);transform-origin:0 0;">120855.9796</div>
<div class="t " style="left:934.22px;top:474.03px;font-size:12px;line-height:14px;color:#444444;transform:scaleX(0.9350);transform-origin:0 0;">35635.2518</div>
<div class="t " style="left:1079.19px;top:474.03px;font-size:12px;line-height:14px;color:#444444;transform:scaleX(0.9350);transform-origin:0 0;">0.5942</div>
<div class="a" style="left:142px;top:492px;width:975px;height:21px;background:#ffffff"></div>
<div class="a" style="left:142px;top:513px;width:975px;height:1px;background:#8a8a8a"></div>
<div class="t " style="left:141.02px;top:496.03px;font-size:12px;line-height:14px;color:#444444;transform:scaleX(0.9350);transform-origin:0 0;">00</div>
<div class="t " style="left:239.19px;top:496.03px;font-size:12px;line-height:14px;color:#444444;transform:scaleX(0.9350);transform-origin:0 0;">3.0000</div>
<div class="t " style="left:352.92px;top:496.03px;font-size:12px;line-height:14px;color:#444444;transform:scaleX(0.9350);transform-origin:0 0;">32.0000</div>
<div class="t " style="left:466.70px;top:496.03px;font-size:12px;line-height:14px;color:#444444;transform:scaleX(0.9350);transform-origin:0 0;">100.0000</div>
<div class="t " style="left:592.92px;top:496.03px;font-size:12px;line-height:14px;color:#444444;transform:scaleX(0.9350);transform-origin:0 0;">50.0000</div>
<div class="t " style="left:719.19px;top:496.03px;font-size:12px;line-height:14px;color:#444444;transform:scaleX(0.9350);transform-origin:0 0;">0.0000</div>
<div class="t " style="left:820.44px;top:496.03px;font-size:12px;line-height:14px;color:#444444;transform:scaleX(0.9350);transform-origin:0 0;">4819.7494</div>
<div class="t " style="left:940.44px;top:496.03px;font-size:12px;line-height:14px;color:#444444;transform:scaleX(0.9350);transform-origin:0 0;">1325.7997</div>
<div class="t " style="left:1079.19px;top:496.03px;font-size:12px;line-height:14px;color:#444444;transform:scaleX(0.9350);transform-origin:0 0;">0.6005</div>
<div class="a" style="left:142px;top:514px;width:975px;height:21px;background:#ffffff"></div>
<div class="a" style="left:142px;top:535px;width:975px;height:1px;background:#8a8a8a"></div>
<div class="t " style="left:141.02px;top:518.03px;font-size:12px;line-height:14px;color:#444444;transform:scaleX(0.9350);transform-origin:0 0;">00</div>
<div class="t " style="left:239.19px;top:518.03px;font-size:12px;line-height:14px;color:#444444;transform:scaleX(0.9350);transform-origin:0 0;">2.0000</div>
<div class="t " style="left:352.92px;top:518.03px;font-size:12px;line-height:14px;color:#444444;transform:scaleX(0.9350);transform-origin:0 0;">32.0000</div>
<div class="t " style="left:466.70px;top:518.03px;font-size:12px;line-height:14px;color:#444444;transform:scaleX(0.9350);transform-origin:0 0;">100.0000</div>
<div class="t " style="left:592.92px;top:518.03px;font-size:12px;line-height:14px;color:#444444;transform:scaleX(0.9350);transform-origin:0 0;">50.0000</div>
<div class="t " style="left:719.19px;top:518.03px;font-size:12px;line-height:14px;color:#444444;transform:scaleX(0.9350);transform-origin:0 0;">0.0000</div>
<div class="t " style="left:807.96px;top:518.03px;font-size:12px;line-height:14px;color:#444444;transform:scaleX(0.9350);transform-origin:0 0;">199935.2630</div>
<div class="t " style="left:927.96px;top:518.03px;font-size:12px;line-height:14px;color:#444444;transform:scaleX(0.9350);transform-origin:0 0;">405419.3415</div>
<div class="t " style="left:1079.19px;top:518.03px;font-size:12px;line-height:14px;color:#444444;transform:scaleX(0.9350);transform-origin:0 0;">0.6477</div>
<div class="a" style="left:142px;top:536px;width:975px;height:21px;background:#ffffff"></div>
<div class="a" style="left:142px;top:557px;width:975px;height:1px;background:#8a8a8a"></div>
<div class="t " style="left:141.02px;top:540.03px;font-size:12px;line-height:14px;color:#444444;transform:scaleX(0.9350);transform-origin:0 0;">00</div>
<div class="t " style="left:239.19px;top:540.03px;font-size:12px;line-height:14px;color:#444444;transform:scaleX(0.9350);transform-origin:0 0;">2.0000</div>
<div class="t " style="left:352.92px;top:540.03px;font-size:12px;line-height:14px;color:#444444;transform:scaleX(0.9350);transform-origin:0 0;">16.0000</div>
<div class="t " style="left:466.70px;top:540.03px;font-size:12px;line-height:14px;color:#444444;transform:scaleX(0.9350);transform-origin:0 0;">100.0000</div>
<div class="t " style="left:592.92px;top:540.03px;font-size:12px;line-height:14px;color:#444444;transform:scaleX(0.9350);transform-origin:0 0;">50.0000</div>
<div class="t " style="left:719.19px;top:540.03px;font-size:12px;line-height:14px;color:#444444;transform:scaleX(0.9350);transform-origin:0 0;">0.0000</div>
<div class="t " style="left:820.44px;top:540.03px;font-size:12px;line-height:14px;color:#444444;transform:scaleX(0.9350);transform-origin:0 0;">8271.2929</div>
<div class="t " style="left:934.22px;top:540.03px;font-size:12px;line-height:14px;color:#444444;transform:scaleX(0.9350);transform-origin:0 0;">21959.7139</div>
<div class="t " style="left:1079.19px;top:540.03px;font-size:12px;line-height:14px;color:#444444;transform:scaleX(0.9350);transform-origin:0 0;">0.7267</div>
<div class="a" style="left:142px;top:558px;width:975px;height:21px;background:#ffffff"></div>
<div class="a" style="left:142px;top:579px;width:975px;height:1px;background:#8a8a8a"></div>
<div class="t " style="left:141.02px;top:562.03px;font-size:12px;line-height:14px;color:#444444;transform:scaleX(0.9350);transform-origin:0 0;">00</div>
<div class="t " style="left:239.19px;top:562.03px;font-size:12px;line-height:14px;color:#444444;transform:scaleX(0.9350);transform-origin:0 0;">2.0000</div>
<div class="t " style="left:352.92px;top:562.03px;font-size:12px;line-height:14px;color:#444444;transform:scaleX(0.9350);transform-origin:0 0;">32.0000</div>
<div class="t " style="left:466.70px;top:562.03px;font-size:12px;line-height:14px;color:#444444;transform:scaleX(0.9350);transform-origin:0 0;">100.0000</div>
<div class="t " style="left:592.92px;top:562.03px;font-size:12px;line-height:14px;color:#444444;transform:scaleX(0.9350);transform-origin:0 0;">50.0000</div>
<div class="t " style="left:719.19px;top:562.03px;font-size:12px;line-height:14px;color:#444444;transform:scaleX(0.9350);transform-origin:0 0;">0.0000</div>
<div class="t " style="left:820.44px;top:562.03px;font-size:12px;line-height:14px;color:#444444;transform:scaleX(0.9350);transform-origin:0 0;">3538.1242</div>
<div class="t " style="left:940.44px;top:562.03px;font-size:12px;line-height:14px;color:#444444;transform:scaleX(0.9350);transform-origin:0 0;">3827.9582</div>
<div class="t " style="left:1079.19px;top:562.03px;font-size:12px;line-height:14px;color:#444444;transform:scaleX(0.9350);transform-origin:0 0;">0.7939</div>
<div class="a" style="left:142px;top:580px;width:975px;height:21px;background:#ffffff"></div>
<div class="a" style="left:142px;top:601px;width:975px;height:1px;background:#8a8a8a"></div>
<div class="t " style="left:141.02px;top:584.03px;font-size:12px;line-height:14px;color:#444444;transform:scaleX(0.9350);transform-origin:0 0;">00</div>
<div class="t " style="left:239.19px;top:584.03px;font-size:12px;line-height:14px;color:#444444;transform:scaleX(0.9350);transform-origin:0 0;">3.0000</div>
<div class="t " style="left:352.92px;top:584.03px;font-size:12px;line-height:14px;color:#444444;transform:scaleX(0.9350);transform-origin:0 0;">64.0000</div>
<div class="t " style="left:466.70px;top:584.03px;font-size:12px;line-height:14px;color:#444444;transform:scaleX(0.9350);transform-origin:0 0;">100.0000</div>
<div class="t " style="left:592.92px;top:584.03px;font-size:12px;line-height:14px;color:#444444;transform:scaleX(0.9350);transform-origin:0 0;">50.0000</div>
<div class="t " style="left:719.19px;top:584.03px;font-size:12px;line-height:14px;color:#444444;transform:scaleX(0.9350);transform-origin:0 0;">0.0000</div>
<div class="t " style="left:820.44px;top:584.03px;font-size:12px;line-height:14px;color:#444444;transform:scaleX(0.9350);transform-origin:0 0;">2838.8267</div>
<div class="t " style="left:934.22px;top:584.03px;font-size:12px;line-height:14px;color:#444444;transform:scaleX(0.9350);transform-origin:0 0;">22895.7948</div>
<div class="t " style="left:1079.19px;top:584.03px;font-size:12px;line-height:14px;color:#444444;transform:scaleX(0.9350);transform-origin:0 0;">0.8026</div>
<div class="a" style="left:142px;top:602px;width:975px;height:21px;background:#ffffff"></div>
<div class="a" style="left:142px;top:623px;width:975px;height:1px;background:#8a8a8a"></div>
<div class="t " style="left:141.02px;top:606.03px;font-size:12px;line-height:14px;color:#444444;transform:scaleX(0.9350);transform-origin:0 0;">00</div>
<div class="t " style="left:239.19px;top:606.03px;font-size:12px;line-height:14px;color:#444444;transform:scaleX(0.9350);transform-origin:0 0;">2.0000</div>
<div class="t " style="left:352.92px;top:606.03px;font-size:12px;line-height:14px;color:#444444;transform:scaleX(0.9350);transform-origin:0 0;">32.0000</div>
<div class="t " style="left:466.70px;top:606.03px;font-size:12px;line-height:14px;color:#444444;transform:scaleX(0.9350);transform-origin:0 0;">100.0000</div>
<div class="t " style="left:592.92px;top:606.03px;font-size:12px;line-height:14px;color:#444444;transform:scaleX(0.9350);transform-origin:0 0;">50.0000</div>
<div class="t " style="left:719.19px;top:606.03px;font-size:12px;line-height:14px;color:#444444;transform:scaleX(0.9350);transform-origin:0 0;">0.0000</div>
<div class="t " style="left:826.70px;top:606.03px;font-size:12px;line-height:14px;color:#444444;transform:scaleX(0.9350);transform-origin:0 0;">499.8337</div>
<div class="t " style="left:934.22px;top:606.03px;font-size:12px;line-height:14px;color:#444444;transform:scaleX(0.9350);transform-origin:0 0;">31844.2498</div>
<div class="t " style="left:1079.19px;top:606.03px;font-size:12px;line-height:14px;color:#444444;transform:scaleX(0.9350);transform-origin:0 0;">0.8191</div>
<div class="a" style="left:142px;top:624px;width:975px;height:21px;background:#ffffff"></div>
<div class="a" style="left:142px;top:645px;width:975px;height:1px;background:#8a8a8a"></div>
<div class="t " style="left:141.02px;top:628.03px;font-size:12px;line-height:14px;color:#444444;transform:scaleX(0.9350);transform-origin:0 0;">00</div>
<div class="t " style="left:239.19px;top:628.03px;font-size:12px;line-height:14px;color:#444444;transform:scaleX(0.9350);transform-origin:0 0;">3.0000</div>
<div class="t " style="left:352.92px;top:628.03px;font-size:12px;line-height:14px;color:#444444;transform:scaleX(0.9350);transform-origin:0 0;">64.0000</div>
<div class="t " style="left:466.70px;top:628.03px;font-size:12px;line-height:14px;color:#444444;transform:scaleX(0.9350);transform-origin:0 0;">100.0000</div>
<div class="t " style="left:592.92px;top:628.03px;font-size:12px;line-height:14px;color:#444444;transform:scaleX(0.9350);transform-origin:0 0;">50.0000</div>
<div class="t " style="left:719.19px;top:628.03px;font-size:12px;line-height:14px;color:#444444;transform:scaleX(0.9350);transform-origin:0 0;">0.0000</div>
<div class="t " style="left:820.44px;top:628.03px;font-size:12px;line-height:14px;color:#444444;transform:scaleX(0.9350);transform-origin:0 0;">3578.1831</div>
<div class="t " style="left:934.22px;top:628.03px;font-size:12px;line-height:14px;color:#444444;transform:scaleX(0.9350);transform-origin:0 0;">19753.4129</div>
<div class="t " style="left:1079.19px;top:628.03px;font-size:12px;line-height:14px;color:#444444;transform:scaleX(0.9350);transform-origin:0 0;">0.8591</div>
<div class="a" style="left:142px;top:646px;width:975px;height:21px;background:#ffffff"></div>
<div class="a" style="left:142px;top:667px;width:975px;height:1px;background:#8a8a8a"></div>
<div class="t " style="left:141.02px;top:650.03px;font-size:12px;line-height:14px;color:#444444;transform:scaleX(0.9350);transform-origin:0 0;">00</div>
<div class="t " style="left:239.19px;top:650.03px;font-size:12px;line-height:14px;color:#444444;transform:scaleX(0.9350);transform-origin:0 0;">2.0000</div>
<div class="t " style="left:352.92px;top:650.03px;font-size:12px;line-height:14px;color:#444444;transform:scaleX(0.9350);transform-origin:0 0;">32.0000</div>
<div class="t " style="left:466.70px;top:650.03px;font-size:12px;line-height:14px;color:#444444;transform:scaleX(0.9350);transform-origin:0 0;">100.0000</div>
<div class="t " style="left:592.92px;top:650.03px;font-size:12px;line-height:14px;color:#444444;transform:scaleX(0.9350);transform-origin:0 0;">50.0000</div>
<div class="t " style="left:719.19px;top:650.03px;font-size:12px;line-height:14px;color:#444444;transform:scaleX(0.9350);transform-origin:0 0;">0.0000</div>
<div class="t " style="left:820.44px;top:650.03px;font-size:12px;line-height:14px;color:#444444;transform:scaleX(0.9350);transform-origin:0 0;">8986.5821</div>
<div class="t " style="left:940.44px;top:650.03px;font-size:12px;line-height:14px;color:#444444;transform:scaleX(0.9350);transform-origin:0 0;">8149.8597</div>
<div class="t " style="left:1079.19px;top:650.03px;font-size:12px;line-height:14px;color:#444444;transform:scaleX(0.9350);transform-origin:0 0;">0.8790</div>
<div class="a" style="left:157px;top:316px;width:1px;height:352px;background:#8a8a8a"></div>
<div class="a" style="left:277px;top:316px;width:1px;height:352px;background:#8a8a8a"></div>
<div class="a" style="left:397px;top:316px;width:1px;height:352px;background:#8a8a8a"></div>
<div class="a" style="left:517px;top:316px;width:1px;height:352px;background:#8a8a8a"></div>
<div class="a" style="left:637px;top:316px;width:1px;height:352px;background:#8a8a8a"></div>
<div class="a" style="left:757px;top:316px;width:1px;height:352px;background:#8a8a8a"></div>
<div class="a" style="left:877px;top:316px;width:1px;height:352px;background:#8a8a8a"></div>
<div class="a" style="left:997px;top:316px;width:1px;height:352px;background:#8a8a8a"></div>
<div class="a" style="left:1118px;top:316px;width:16px;height:352px;background:#f0f0f0"></div>
<div class="a" style="left:1121px;top:322px;width:0;height:0;border-left:4.5px solid transparent;border-right:4.5px solid transparent;border-bottom:5px solid #a6a6a6"></div>
<div class="a" style="left:1119px;top:333px;width:13px;height:142px;background:#c2c2c2"></div>
<div class="a" style="left:1121.0px;top:657px;width:0;height:0;border-left:4.5px solid transparent;border-right:4.5px solid transparent;border-top:5px solid #555"></div>
<div class="a" style="left:142px;top:668px;width:975px;height:18px;background:#f0f0f0"></div>
<div class="a" style="left:147px;top:673px;width:0;height:0;border-top:4.5px solid transparent;border-bottom:4.5px solid transparent;border-right:5px solid #555"></div>
<div class="a" style="left:562px;top:671px;width:538px;height:13px;background:#c2c2c2"></div>
<div class="a" style="left:1107px;top:673px;width:0;height:0;border-top:4.5px solid transparent;border-bottom:4.5px solid transparent;border-left:5px solid #b8b8b8"></div>
<div class="a" style="left:1117px;top:668px;width:17px;height:18px;background:#dcdcdc"></div>
<div class="a" style="left:0;top:0;width:1144px;height:696px;border:1px solid #8a8a8a;pointer-events:none"></div>
</body></html>
